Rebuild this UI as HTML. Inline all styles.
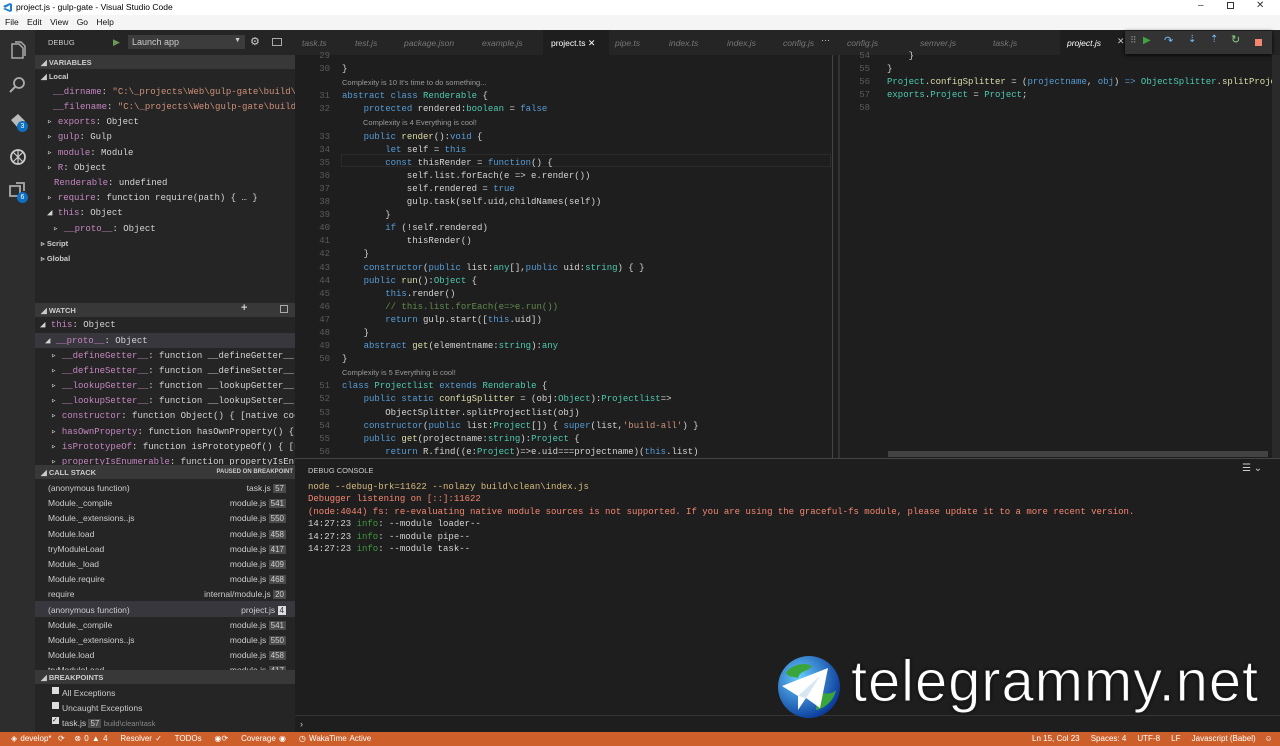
<!DOCTYPE html>
<html><head><meta charset="utf-8"><style>
*{margin:0;padding:0;box-sizing:border-box}
body{width:1280px;height:746px;overflow:hidden;background:#1e1e1e;font-family:"Liberation Sans",sans-serif;position:relative}
.a{position:absolute;white-space:pre}
.blk{white-space:normal}
.blk>div{white-space:pre;position:relative}
.m{font-family:"Liberation Mono",monospace;font-size:9px}
.s{font-size:9px;color:#ccc}
.k{color:#569cd6}.c{color:#4ec9b0}.st{color:#ce9178}.f{color:#dcdcaa}.cm{color:#608b4e}.p{color:#c586c0}.w{color:#d4d4d4}
.ln{color:#5a5a5a;width:32px;text-align:right;display:inline-block;margin-right:12px}
.rl .ln{width:30px;margin-right:17px}
.lens{font-size:7.5px;color:#999;font-family:"Liberation Sans",sans-serif}
.hdr{position:absolute;left:35px;width:260px;height:14px;background:#383838;font-size:7.5px;font-weight:bold;color:#ccc;padding:3px 0 0 6px}
.tab{position:absolute;top:30px;height:25px;font-size:8.5px;color:#777;padding-top:8px;font-style:italic}
.num{background:#4a4a4a;color:#ccc;padding:0 2px;font-size:8px}
</style></head><body>
<!-- title bar -->
<div class="a" style="left:0;top:0;width:1280px;height:15px;background:#fff"></div>
<svg class="a" style="left:2px;top:2px" width="11" height="11" viewBox="0 0 11 11"><path d="M1 4l7-3 2 1v7l-2 1-7-3 2-1 5 2V3L3 6z" fill="#1f7fd0"/></svg>
<div class="a" style="left:16px;top:2px;font-size:8.5px;color:#000">project.js - gulp-gate - Visual Studio Code</div>
<div class="a" style="left:1198px;top:0;font-size:10px;color:#333">–</div>
<div class="a" style="left:1227px;top:2px;width:7px;height:7px;border:1px solid #333"></div>
<div class="a" style="left:1256px;top:0;font-size:10px;color:#333">✕</div>
<div class="a" style="left:0;top:15px;width:1280px;height:15px;background:#f5f5f5"></div>
<div class="a" style="left:5px;top:17px;font-size:8.5px;color:#111;word-spacing:6px">File Edit View Go Help</div>
<!-- activity bar -->
<div class="a" style="left:0;top:30px;width:35px;height:702px;background:#2d2d2d"></div>
<svg class="a" style="left:8px;top:40px" width="20" height="180" viewBox="0 0 20 180">
<path d="M4 4h7l4 4v10H4z M7 2h6l4 4v10" fill="none" stroke="#aaa" stroke-width="1.5"/>
<circle cx="11" cy="43" r="5" fill="none" stroke="#aaa" stroke-width="1.8"/><path d="M7 47l-5 5" stroke="#aaa" stroke-width="2"/>
<path d="M3 80l7-6 7 7-7 7z" fill="#bbb"/>
<circle cx="10" cy="117" r="7" fill="none" stroke="#ccc" stroke-width="1.8"/><path d="M5 112l10 10M15 112l-10 10M10 110v14" stroke="#ccc" stroke-width="1.2"/>
<path d="M2 146h10v10H2z M8 143h8v8" fill="none" stroke="#aaa" stroke-width="1.8"/>
</svg>
<div class="a" style="left:17px;top:121px;width:11px;height:11px;border-radius:6px;background:#0e70c0;color:#fff;font-size:7px;text-align:center;line-height:11px">3</div>
<div class="a" style="left:17px;top:192px;width:11px;height:11px;border-radius:6px;background:#0e70c0;color:#fff;font-size:7px;text-align:center;line-height:11px">6</div>
<!-- sidebar -->
<div class="a" style="left:35px;top:30px;width:260px;height:702px;background:#252526"></div>
<div class="a s" style="left:48px;top:38px;font-size:7.5px">DEBUG</div>
<div class="a" style="left:113px;top:37px;color:#6a9955;font-size:9px">▶</div>
<div class="a" style="left:128px;top:35px;width:117px;height:14px;background:#3c3c3c;font-size:9px;color:#ccc;padding:2px 0 0 4px">Launch app<span style="position:absolute;right:4px;top:2px;font-size:7px">▼</span></div>
<div class="a" style="left:250px;top:35px;color:#ccc;font-size:11px">⚙</div>
<div class="a" style="left:272px;top:38px;width:10px;height:8px;border:1px solid #aaa"></div>
<div class="hdr" style="top:55px">◢ VARIABLES</div>
<div class="a s" style="left:41px;top:72px;font-size:7.5px;font-weight:bold">◢ Local</div>
<div class="a m" style="left:53px;top:87px"><span class="p">__dirname</span><span class="w">: </span><span class="st">"C:\_projects\Web\gulp-gate\build\cle…</span></div>
<div class="a m" style="left:53px;top:102px"><span class="p">__filename</span><span class="w">: </span><span class="st">"C:\_projects\Web\gulp-gate\build\cl…</span></div>
<div class="a m" style="left:47px;top:117px"><span class="w">▹ </span><span class="p">exports</span><span class="w">: Object</span></div>
<div class="a m" style="left:47px;top:132px"><span class="w">▹ </span><span class="p">gulp</span><span class="w">: Gulp</span></div>
<div class="a m" style="left:47px;top:148px"><span class="w">▹ </span><span class="p">module</span><span class="w">: Module</span></div>
<div class="a m" style="left:47px;top:163px"><span class="w">▹ </span><span class="p">R</span><span class="w">: Object</span></div>
<div class="a m" style="left:54px;top:178px"><span class="p">Renderable</span><span class="w">: undefined</span></div>
<div class="a m" style="left:47px;top:193px"><span class="w">▹ </span><span class="p">require</span><span class="w">: function require(path) { … }</span></div>
<div class="a m" style="left:47px;top:208px"><span class="w">◢ </span><span class="p">this</span><span class="w">: Object</span></div>
<div class="a m" style="left:53px;top:224px"><span class="w">▹ </span><span class="p">__proto__</span><span class="w">: Object</span></div>
<div class="a s" style="left:41px;top:239px;font-size:7.5px;font-weight:bold">▹ Script</div>
<div class="a s" style="left:41px;top:254px;font-size:7.5px;font-weight:bold">▹ Global</div>
<div class="hdr" style="top:303px">◢ WATCH<span style="position:absolute;left:206px;top:0;font-size:11px;line-height:10px">+</span><span style="position:absolute;left:245px;top:2px;width:8px;height:8px;border:1px solid #aaa"></span></div>
<div class="a m" style="left:40px;top:320px"><span class="w">◢ </span><span class="p">this</span><span class="w">: Object</span></div>
<div class="a" style="left:35px;top:333px;width:260px;height:15px;background:#37373d"></div>
<div class="a m" style="left:45px;top:336px"><span class="w">◢ </span><span class="p">__proto__</span><span class="w">: Object</span></div>
<div class="a m" style="left:51px;top:351px"><span class="w">▹ </span><span class="p">__defineGetter__</span><span class="w">: function __defineGetter__() {…</span></div>
<div class="a m" style="left:51px;top:366px"><span class="w">▹ </span><span class="p">__defineSetter__</span><span class="w">: function __defineSetter__() {…</span></div>
<div class="a m" style="left:51px;top:381px"><span class="w">▹ </span><span class="p">__lookupGetter__</span><span class="w">: function __lookupGetter__() {…</span></div>
<div class="a m" style="left:51px;top:396px"><span class="w">▹ </span><span class="p">__lookupSetter__</span><span class="w">: function __lookupSetter__() {…</span></div>
<div class="a m" style="left:51px;top:411px"><span class="w">▹ </span><span class="p">constructor</span><span class="w">: function Object() { [native code] …</span></div>
<div class="a m" style="left:51px;top:427px"><span class="w">▹ </span><span class="p">hasOwnProperty</span><span class="w">: function hasOwnProperty() { [na…</span></div>
<div class="a m" style="left:51px;top:442px"><span class="w">▹ </span><span class="p">isPrototypeOf</span><span class="w">: function isPrototypeOf() { [nati…</span></div>
<div class="a m" style="left:51px;top:457px;height:8px;overflow:hidden"><span class="w">▹ </span><span class="p">propertyIsEnumerable</span><span class="w">: function propertyIsEnumer…</span></div>
<div class="hdr" style="top:465px">◢ CALL STACK<span style="position:absolute;right:2px;top:4px;font-size:6px">PAUSED ON BREAKPOINT</span></div>
<div class="a" style="left:35px;top:601px;width:260px;height:16px;background:#37373d"></div>
<div class="a blk" style="left:48px;top:481px;width:238px;height:189px;overflow:hidden;font-size:8.5px;color:#ccc;line-height:15.2px">
<div>(anonymous function)<span style="position:absolute;right:0">task.js <span class="num">57</span></span></div>
<div>Module._compile<span style="position:absolute;right:0">module.js <span class="num">541</span></span></div>
<div>Module._extensions..js<span style="position:absolute;right:0">module.js <span class="num">550</span></span></div>
<div>Module.load<span style="position:absolute;right:0">module.js <span class="num">458</span></span></div>
<div>tryModuleLoad<span style="position:absolute;right:0">module.js <span class="num">417</span></span></div>
<div>Module._load<span style="position:absolute;right:0">module.js <span class="num">409</span></span></div>
<div>Module.require<span style="position:absolute;right:0">module.js <span class="num">468</span></span></div>
<div>require<span style="position:absolute;right:0">internal/module.js <span class="num">20</span></span></div>
<div>(anonymous function)<span style="position:absolute;right:0">project.js <span class="num" style="background:#ddd;color:#333">4</span></span></div>
<div>Module._compile<span style="position:absolute;right:0">module.js <span class="num">541</span></span></div>
<div>Module._extensions..js<span style="position:absolute;right:0">module.js <span class="num">550</span></span></div>
<div>Module.load<span style="position:absolute;right:0">module.js <span class="num">458</span></span></div>
<div>tryModuleLoad<span style="position:absolute;right:0">module.js <span class="num">417</span></span></div>
</div>
<div class="hdr" style="top:670px">◢ BREAKPOINTS</div>
<div class="a" style="left:52px;top:687px;width:7px;height:7px;background:#ddd"></div>
<div class="a s" style="left:62px;top:688px;font-size:8.5px">All Exceptions</div>
<div class="a" style="left:52px;top:702px;width:7px;height:7px;background:#ddd"></div>
<div class="a s" style="left:62px;top:703px;font-size:8.5px">Uncaught Exceptions</div>
<div class="a" style="left:52px;top:717px;width:7px;height:7px;background:#ddd;font-size:7px;line-height:7px;color:#222">✓</div>
<div class="a s" style="left:62px;top:718px;font-size:8.5px">task.js <span class="num">57</span> <span style="color:#888;font-size:7.5px">build\clean\task</span></div>
<!-- tabs -->
<div class="a" style="left:295px;top:30px;width:985px;height:25px;background:#252526"></div>
<div class="tab" style="left:302px">task.ts</div><div class="tab" style="left:355px">test.js</div><div class="tab" style="left:404px">package.json</div><div class="tab" style="left:482px">example.js</div>
<div class="a" style="left:543px;top:30px;width:66px;height:25px;background:#1e1e1e"></div>
<div class="tab" style="left:551px;color:#fff;font-style:normal">project.ts <span style="font-size:9px">✕</span></div>
<div class="tab" style="left:615px">pipe.ts</div><div class="tab" style="left:669px">index.ts</div><div class="tab" style="left:727px">index.js</div><div class="tab" style="left:783px">config.js</div>
<div class="a" style="left:821px;top:35px;color:#ccc;font-size:9px">···</div>
<div class="tab" style="left:847px">config.js</div><div class="tab" style="left:920px">semver.js</div><div class="tab" style="left:993px">task.js</div>
<div class="a" style="left:1060px;top:30px;width:66px;height:25px;background:#1e1e1e"></div>
<div class="tab" style="left:1067px;color:#fff">project.js</div>
<div class="a" style="left:1117px;top:36px;color:#ccc;font-size:9px">✕</div>
<!-- debug toolbar -->
<div class="a" style="left:1125px;top:31px;width:147px;height:23px;background:#333;box-shadow:0 1px 4px #000"></div>
<div class="a" style="left:1130px;top:35px;color:#888;font-size:9px">⠿</div>
<div class="a" style="left:1143px;top:35px;color:#3fa33f;font-size:10px">▶</div>
<div class="a" style="left:1164px;top:34px;color:#75beff;font-size:11px">↷</div>
<div class="a" style="left:1188px;top:34px;color:#75beff;font-size:10px">⇣</div>
<div class="a" style="left:1210px;top:34px;color:#75beff;font-size:10px">⇡</div>
<div class="a" style="left:1231px;top:33px;color:#89d185;font-size:11px">↻</div>
<div class="a" style="left:1255px;top:39px;width:7px;height:7px;background:#f48771"></div>
<!-- left editor -->
<div class="a" style="left:295px;top:55px;width:543px;height:403px;background:#1e1e1e"></div>
<div class="a" style="left:838px;top:55px;width:2px;height:403px;background:#333"></div>
<div class="a" style="left:832px;top:55px;width:1px;height:403px;background:#444"></div>
<div class="a" style="left:341px;top:154px;width:490px;height:13px;border:1px solid #2a2a2a"></div>
<div class="a m blk" style="left:298px;top:50px;line-height:13.1px;width:534px;height:408px;overflow:hidden">
<div><span class="ln">29</span></div>
<div><span class="ln">30</span><span class="w">}</span></div>
<div><span class="lens" style="margin-left:44px">Complexity is 10 It's time to do something...</span></div>
<div><span class="ln">31</span><span class="k">abstract class</span> <span class="c">Renderable</span> <span class="w">{</span></div>
<div><span class="ln">32</span>    <span class="k">protected</span> <span class="w">rendered:</span><span class="c">boolean</span> <span class="w">=</span> <span class="k">false</span></div>
<div><span class="lens" style="margin-left:65px">Complexity is 4 Everything is cool!</span></div>
<div><span class="ln">33</span>    <span class="k">public</span> <span class="f">render</span><span class="w">():</span><span class="k">void</span> <span class="w">{</span></div>
<div><span class="ln">34</span>        <span class="k">let</span> <span class="w">self =</span> <span class="k">this</span></div>
<div><span class="ln">35</span>        <span class="k">const</span> <span class="w">thisRender =</span> <span class="k">function</span><span class="w">() {</span></div>
<div><span class="ln">36</span><span class="w">            self.list.forEach(e =&gt; e.render())</span></div>
<div><span class="ln">37</span><span class="w">            self.rendered = </span><span class="k">true</span></div>
<div><span class="ln">38</span><span class="w">            gulp.task(self.uid,childNames(self))</span></div>
<div><span class="ln">39</span><span class="w">        }</span></div>
<div><span class="ln">40</span>        <span class="k">if</span><span class="w"> (!self.rendered)</span></div>
<div><span class="ln">41</span><span class="w">            thisRender()</span></div>
<div><span class="ln">42</span><span class="w">    }</span></div>
<div><span class="ln">43</span>    <span class="k">constructor</span><span class="w">(</span><span class="k">public</span> <span class="w">list:</span><span class="c">any</span><span class="w">[],</span><span class="k">public</span> <span class="w">uid:</span><span class="c">string</span><span class="w">) { }</span></div>
<div><span class="ln">44</span>    <span class="k">public</span> <span class="f">run</span><span class="w">():</span><span class="c">Object</span> <span class="w">{</span></div>
<div><span class="ln">45</span>        <span class="k">this</span><span class="w">.render()</span></div>
<div><span class="ln">46</span>        <span class="cm">// this.list.forEach(e=&gt;e.run())</span></div>
<div><span class="ln">47</span>        <span class="k">return</span><span class="w"> gulp.start([</span><span class="k">this</span><span class="w">.uid])</span></div>
<div><span class="ln">48</span><span class="w">    }</span></div>
<div><span class="ln">49</span>    <span class="k">abstract</span> <span class="f">get</span><span class="w">(elementname:</span><span class="c">string</span><span class="w">):</span><span class="c">any</span></div>
<div><span class="ln">50</span><span class="w">}</span></div>
<div><span class="lens" style="margin-left:44px">Complexity is 5 Everything is cool!</span></div>
<div><span class="ln">51</span><span class="k">class</span> <span class="c">Projectlist</span> <span class="k">extends</span> <span class="c">Renderable</span> <span class="w">{</span></div>
<div><span class="ln">52</span>    <span class="k">public static</span> <span class="f">configSplitter</span><span class="w"> = (obj:</span><span class="c">Object</span><span class="w">):</span><span class="c">Projectlist</span><span class="w">=&gt;</span></div>
<div><span class="ln">53</span><span class="w">        ObjectSplitter.splitProjectlist(obj)</span></div>
<div><span class="ln">54</span>    <span class="k">constructor</span><span class="w">(</span><span class="k">public</span> <span class="w">list:</span><span class="c">Project</span><span class="w">[]) { </span><span class="k">super</span><span class="w">(list,</span><span class="st">'build-all'</span><span class="w">) }</span></div>
<div><span class="ln">55</span>    <span class="k">public</span> <span class="f">get</span><span class="w">(projectname:</span><span class="c">string</span><span class="w">):</span><span class="c">Project</span> <span class="w">{</span></div>
<div><span class="ln">56</span>        <span class="k">return</span><span class="w"> R.find((e:</span><span class="c">Project</span><span class="w">)=&gt;e.uid===projectname)(</span><span class="k">this</span><span class="w">.list)</span></div>
</div>
<!-- right editor -->
<div class="a" style="left:1272px;top:55px;width:8px;height:403px;background:#2a2a2a"></div>
<div class="a" style="left:888px;top:451px;width:380px;height:6px;background:#424242"></div>
<div class="a m blk rl" style="left:840px;top:50px;line-height:13.1px;width:432px;height:100px;overflow:hidden">
<div><span class="ln">54</span><span class="w">    }</span></div>
<div><span class="ln">55</span><span class="w">}</span></div>
<div><span class="ln">56</span><span class="c">Project</span><span class="w">.</span><span class="f">configSplitter</span><span class="w"> = (</span><span class="k">projectname</span><span class="w">, </span><span class="k">obj</span><span class="w">) </span><span class="k">=&gt;</span><span class="w"> </span><span class="c">ObjectSplitter</span><span class="w">.</span><span class="f">splitProject</span></div>
<div><span class="ln">57</span><span class="c">exports</span><span class="w">.</span><span class="c">Project</span><span class="w"> = </span><span class="c">Project</span><span class="w">;</span></div>
<div><span class="ln">58</span></div>
</div>
<!-- panel -->
<div class="a" style="left:295px;top:458px;width:985px;height:274px;background:#1e1e1e;border-top:1px solid #444"></div>
<div class="a s" style="left:308px;top:466px;font-size:7.5px">DEBUG CONSOLE</div>
<div class="a" style="left:1242px;top:463px;color:#ccc;font-size:10px">☰ ⌄</div>
<div class="a m blk" style="left:308px;top:481px;line-height:12.4px">
<div style="color:#d7ba7d">node --debug-brk=11622 --nolazy build\clean\index.js</div>
<div style="color:#f48771">Debugger listening on [::]:11622</div>
<div style="color:#f48771">(node:4044) fs: re-evaluating native module sources is not supported. If you are using the graceful-fs module, please update it to a more recent version.</div>
<div class="w">14:27:23 <span style="color:#3c9a3c">info</span>: --module loader--</div>
<div class="w">14:27:23 <span style="color:#3c9a3c">info</span>: --module pipe--</div>
<div class="w">14:27:23 <span style="color:#3c9a3c">info</span>: --module task--</div>
</div>
<div class="a" style="left:295px;top:715px;width:985px;height:1px;background:#333"></div>
<div class="a" style="left:300px;top:719px;color:#ccc;font-size:9px">›</div>
<!-- logo -->
<svg class="a" style="left:776px;top:654px" width="66" height="66" viewBox="0 0 66 66">
<defs><radialGradient id="g" cx="35%" cy="35%" r="70%"><stop offset="0" stop-color="#6cf"/><stop offset="1" stop-color="#0a3a9a"/></radialGradient></defs>
<circle cx="33" cy="33" r="31" fill="url(#g)"/>
<path d="M10 18c8-8 18-10 26-6-4 6-12 4-14 12-6-2-10 0-12-6z M40 40c8-2 14 2 20-4-2 10-10 18-20 20 2-6-4-10 0-16z" fill="#3aa53a"/>
<path d="M6 32l46-18-8 40-14-10-8 12v-14z" fill="#fff"/><path d="M22 42l22-20-14 22" fill="#d6e6f2"/>
</svg>
<div class="a" style="left:851px;top:648px;font-size:58px;color:#fff;font-family:'Liberation Sans',sans-serif;-webkit-text-stroke:1px #222;text-shadow:0 0 3px #000;letter-spacing:0.9px">telegrammy.net</div>
<!-- status bar -->
<div class="a" style="left:0;top:732px;width:1280px;height:14px;background:#cd5f2a"></div>
<div class="a" style="left:11px;top:734px;font-size:8px;color:#fff;word-spacing:1px">◈ develop*  ⟳   ⊗ 0 ▲ 4    Resolver ✓    TODOs    ◉⟳    Coverage ◉    ◷ WakaTime Active</div>
<div class="a" style="left:1032px;top:734px;font-size:8px;color:#fff">Ln 15, Col 23     Spaces: 4     UTF-8     LF     Javascript (Babel)    ☺</div>
</body></html>
